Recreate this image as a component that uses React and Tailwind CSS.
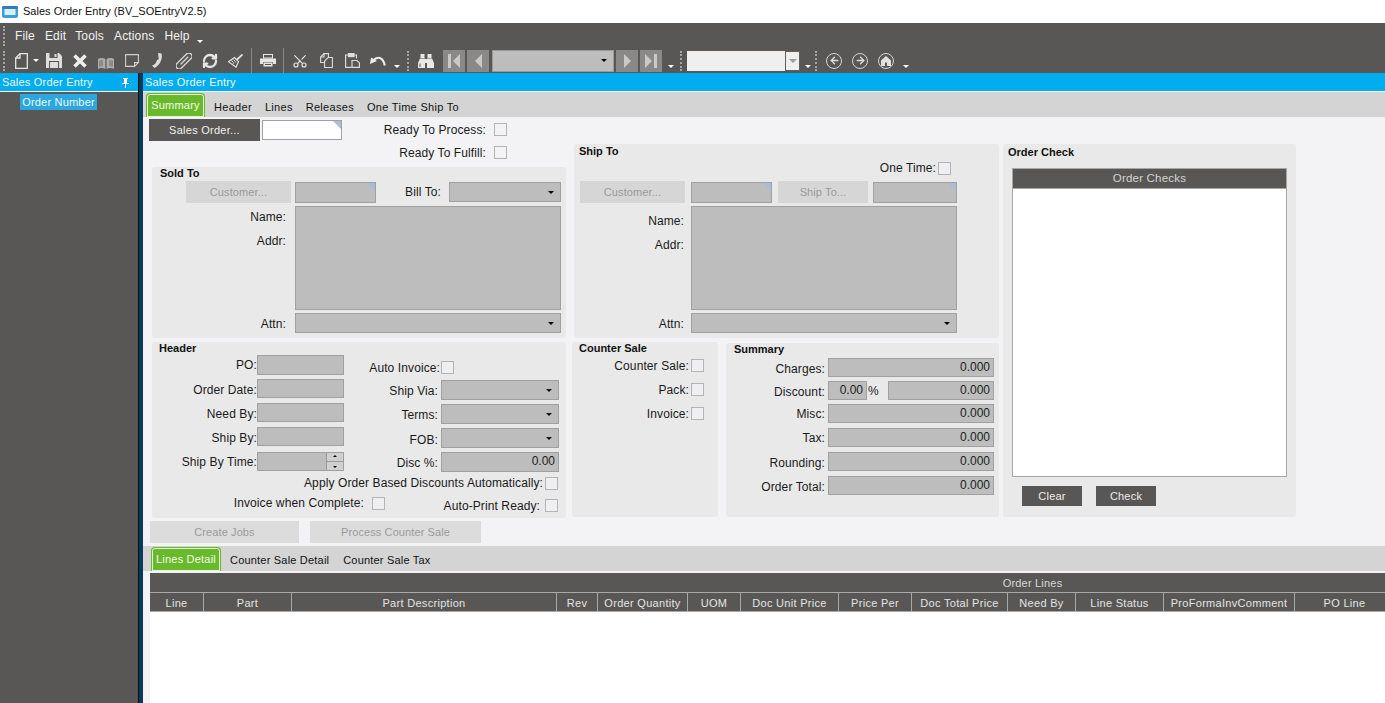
import React from "react";
import { Scissors, ArrowLeft, ArrowRight, RefreshCw } from "lucide-react";

const Lbl = ({ w, children, className = "" }) => (
  <div style={{ width: w }} className={"shrink-0 text-right text-[12px] leading-[14px] text-[#1a1a1a] tracking-[0.1px] whitespace-nowrap " + className}>{children}</div>
);
const Box = ({ w, h = 20, children, corner, className = "" }) => (
  <div style={{ width: w, height: h }} className={"relative shrink-0 border border-[#a0a0a0] bg-[#bdbdbd] text-[12px] leading-[16px] text-[#222] text-right pr-[3px] " + className}>
    {children}
    {corner && <div className="absolute top-0 right-0 w-0 h-0 border-l-[8px] border-l-transparent border-t-[8px] border-t-[#aabcd8]" />}
  </div>
);
const Combo = ({ w }) => (
  <Box w={w} className="flex items-center justify-end pr-[6px]">
    <div className="w-0 h-0 border-x-[3px] border-x-transparent border-t-[3px] border-t-black" />
  </Box>
);
const Chk = ({ className = "" }) => <div className={"w-[13px] h-[13px] shrink-0 border border-[#b4b4b4] bg-[#efeff1] " + className} />;
const DisBtn = ({ w, h = 22, children, className = "" }) => (
  <div style={{ width: w, height: h }} className={"shrink-0 flex items-center justify-center pt-[1px] bg-[#d6d6d6] text-[11px] text-[#9a9a9a] tracking-[0.1px] " + className}>{children}</div>
);
const Title = ({ children, className = "" }) => <div className={"font-bold text-[11px] leading-[13px] text-[#111] " + className}>{children}</div>;

const TabStrip = ({ active, tabs, activeW, className = "", textClass = "" }) => (
  <div className={"flex h-[25px] bg-[#d4d4d4] items-stretch " + className}>
    <div style={{ width: activeW }} className="mt-[1px] h-[24px] shrink-0 rounded-t-[4px] border border-b-0 border-[#68ba2a] shadow-[inset_0_0_0_1px_#e4f2d8] bg-[#68ba2a] text-[#f4fbee] text-[11px] tracking-[0.2px] leading-[22px] text-center whitespace-nowrap">{active}</div>
    <div className={"flex items-center pl-[9px] text-[11px] text-[#111] " + textClass}>
      {tabs.map((t) => <span key={t} className="whitespace-nowrap">{t}</span>)}
    </div>
  </div>
);

const Grip = ({ className = "" }) => <div className={"w-[2px] h-[20px] shrink-0 border-l-2 border-dotted border-[#a5a4a2] " + className} />;
const Sep = ({ className = "" }) => <div className={"w-px h-[25px] bg-[#8b8a88] shrink-0 " + className} />;
const Drop = ({ className = "" }) => <div className={"w-[6px] h-[3px] mt-[12px] shrink-0 " + className}><div className="w-0 h-0 border-x-[3px] border-x-transparent border-t-[3px] border-t-white" /></div>;

const NavBtn = ({ dir, end, className = "" }) => (
  <div className={"w-[22px] h-[22px] shrink-0 bg-[#8a8988] flex items-center justify-center " + className}>
    <svg width="14" height="14" viewBox="0 0 14 14" fill="#c9c9c9">
      {dir === "l" ? (
        <><path d="M13 0v14L6 7z" transform={end ? "" : "translate(-2 0)"} />{end && <rect x="1" y="0" width="3" height="14" />}</>
      ) : (
        <><path d="M1 0v14l7-7z" transform={end ? "" : "translate(3 0)"} />{end && <rect x="10" y="0" width="3" height="14" />}</>
      )}
    </svg>
  </div>
);
const Circle = ({ children, className = "" }) => (
  <div className={"w-[16px] h-[16px] shrink-0 rounded-full border-[1.5px] border-[#d4d4d4] flex items-center justify-center " + className}>{children}</div>
);

const S = "#e6e6e6";
const FileIcon = (p) => (
  <svg width="13" height="16" viewBox="0 0 13 16" fill="none" stroke={S} strokeWidth="1.3" {...p}>
    <path d="M5 .7h7.3v14.6H.7V5z" /><path d="M5 .7V5H.7" />
  </svg>
);
const SaveIcon = (p) => (
  <svg width="16" height="15" viewBox="0 0 16 15" {...p}>
    <path d="M0 0h13l3 3v12H0z" fill="#dedede" />
    <rect x="3.5" y="0" width="8" height="5" fill="#595755" /><rect x="8.5" y="1" width="2" height="3" fill="#dedede" />
    <rect x="3" y="8" width="10" height="7" fill="#595755" /><rect x="4" y="9" width="8" height="6" fill="#dedede" />
  </svg>
);
const XIcon = (p) => (
  <svg width="14" height="14" viewBox="0 0 14 14" stroke="#ececec" strokeWidth="3.6" {...p}><path d="M1.5 1.5l11 11M12.5 1.5l-11 11" /></svg>
);
const BookIcon = (p) => (
  <svg width="16" height="12" viewBox="0 0 16 12" {...p}>
    <path d="M0 2c2-1.5 5-1.5 7.4 0v10C5 10.700 2 10.700 0 12z" fill="#aeadac" /><path d="M16 2c-2-1.500-5-1.500-7.400 0v10c2.400-1.300 5.400-1.300 7.400 0z" fill="#aeadac" />
    <path d="M2 3.500v6M4 3.200v6M12 3.200v6M14 3.500v6" stroke="#595755" strokeWidth="0.8" />
  </svg>
);
const NoteIcon = (p) => (
  <svg width="14" height="13" viewBox="0 0 14 13" fill="none" stroke="#cfcfcf" strokeWidth="1.1" {...p}>
    <path d="M.6.6h12.800v8l-3.800 3.800H.6z" /><path d="M9.600 12.400V8.600h3.800" />
  </svg>
);
const PhoneIcon = (p) => (
  <svg width="11" height="15" viewBox="0 0 11 15" {...p}>
    <path d="M6 0l3.500.6c1.500 5-1.500 11.500-7 14.400L0 12.600c3-1 4.500-3 5-5.600l1.800-.8z" fill="#dedede" />
  </svg>
);
const ClipIcon = (p) => (
  <svg width="16" height="16" viewBox="0 0 16 16" fill="none" stroke="#d8d8d8" strokeWidth="1.300" {...p}>
    <g transform="rotate(45 8 8)"><rect x="4.800" y="-2" width="6.400" height="20" rx="3.200" /><path d="M8 2v11" /></g>
  </svg>
);
const BroomIcon = (p) => (
  <svg width="15" height="14" viewBox="0 0 15 14" fill="none" stroke="#e0e0e0" strokeWidth="1.200" {...p}>
    <path d="M14.500.5L8.500 6" strokeWidth="1.800" />
    <path d="M6.500 3.500l4 4.200-2.500 5.500-7.500-5.500z" />
    <path d="M3.500 6.500l2 2M5.500 5.500l2.500 3M4 11l2-2.500" strokeWidth="0.900" />
  </svg>
);
const PrinterIcon = (p) => (
  <svg width="16" height="13" viewBox="0 0 16 13" {...p}>
    <rect x="3.500" y="0.500" width="9" height="3.500" fill="none" stroke={S} />
    <path d="M0 4.500h16V10h-3V8H3v2H0z" fill={S} />
    <rect x="3.500" y="8.500" width="9" height="4" fill={S} />
    <path d="M5 10.500h6" stroke="#595755" />
  </svg>
);
const CopyIcon = (p) => (
  <svg width="13" height="15" viewBox="0 0 13 15" fill="none" stroke="#dcdcdc" strokeWidth="1.100" {...p}>
    <path d="M4 9.500H.6V4L4 .6h4.500V4" /><path d="M8 4.500h4.400v10H4.600V8z" /><path d="M4 .6V4H.6" />
  </svg>
);
const PasteIcon = (p) => (
  <svg width="15" height="15" viewBox="0 0 15 15" fill="none" stroke="#dcdcdc" strokeWidth="1.200" {...p}>
    <path d="M3.500 2H.6v12.400h6" /><path d="M9 2h2.500v3.500" /><rect x="3.500" y="0.600" width="5.500" height="3" fill="#dcdcdc" />
    <path d="M7 7.500h5l2.400 2.400v4.500H7z" />
  </svg>
);
const UndoIcon = (p) => (
  <svg width="16" height="10" viewBox="0 0 16 10" {...p}>
    <path d="M0 8L1 1.500 7 5z" fill="#ececec" />
    <path d="M3 4.800C7 0 13 .5 14.800 9.500" fill="none" stroke="#ececec" strokeWidth="2.200" />
  </svg>
);
const BinocIcon = (p) => (
  <svg width="16" height="14" viewBox="0 0 16 14" fill="#e8e8e8" {...p}>
    <rect x="2.500" y="0" width="4" height="4" /><rect x="9.500" y="0" width="4" height="4" />
    <path d="M2 4.500h5V14H0V9z" /><path d="M14 4.500H9V14h7V9z" /><rect x="7" y="5" width="2" height="4" />
    <path d="M2 9.500v3.500" stroke="#595755" />
  </svg>
);
const HomeIcon = () => (
  <svg width="10" height="10" viewBox="0 0 10 10" fill="#e0e0e0"><path d="M5 0l5 4.500V10H6V6.500H4V10H0V4.500z" /></svg>
);
const PinIcon = (p) => (
  <svg width="7" height="10" viewBox="0 0 7 10" fill="#ffffff" {...p}><path d="M1 0h5v1H5v4h2v1H4v4H3V6H0V5h2V1H1z" /></svg>
);

const cols = [
  ["Line", 54], ["Part", 88], ["Part Description", 265], ["Rev", 41], ["Order Quantity", 90], ["UOM", 53],
  ["Doc Unit Price", 98], ["Price Per", 73], ["Doc Total Price", 96], ["Need By", 68], ["Line Status", 88], ["ProFormaInvComment", 131], ["PO Line", 100],
];

export default function App() {
  return (
    <div className="w-[1385px] h-[703px] overflow-hidden bg-white flex flex-col font-['Liberation_Sans',Arial,sans-serif]">
      {/* title bar */}
      <div className="h-[23px] flex items-center pl-[2px] shrink-0">
        <svg width="16" height="12" viewBox="0 0 16 12" className="mr-[5px] shrink-0">
          <rect x="0" y="0" width="16" height="12" rx="2" fill="#3f9ed8" />
          <rect x="0" y="0" width="16" height="3" rx="1.500" fill="#2f7fbf" />
          <rect x="2.500" y="3" width="11" height="6" fill="#d8effb" />
        </svg>
        <span className="text-[11px] tracking-[0.02px] text-[#111] whitespace-nowrap">Sales Order Entry (BV_SOEntryV2.5)</span>
      </div>

      {/* menu and toolbar */}
      <div className="h-[50px] shrink-0 bg-[#595755] text-white">
        <div className="h-[25px] flex items-center pl-[3px]">
          <Grip className="mr-[10px]" />
          <div className="flex gap-[10px] text-[12px] tracking-[0.15px] text-[#f2f2f2]">
            <span>File</span><span>Edit</span><span className="-ml-[1px]">Tools</span><span>Actions</span><span>Help</span>
          </div>
          <Drop className="ml-[7px] mt-[5px]" />
        </div>
        <div className="h-[25px] flex items-center pl-[3px]">
          <Grip className="mr-[10px]" />
          <FileIcon className="shrink-0" />
          <div className="w-0 h-0 ml-[5px] border-x-[3px] border-x-transparent border-t-[3px] border-t-white shrink-0" />
          <SaveIcon className="ml-[7px] shrink-0" />
          <XIcon className="ml-[11px] shrink-0" />
          <BookIcon className="ml-[11px] mt-[4px] shrink-0" />
          <NoteIcon className="ml-[11px] shrink-0" />
          <PhoneIcon className="ml-[13px] shrink-0" />
          <ClipIcon className="ml-[13px] shrink-0" />
          <RefreshCw size={16} strokeWidth={3.4} className="ml-[10px] shrink-0 text-[#e6e6e6]" />
          <BroomIcon className="ml-[10px] shrink-0" />
          <Sep className="ml-[8px]" />
          <PrinterIcon className="ml-[8px] shrink-0" />
          <Sep className="ml-[7px]" />
          <Scissors size={16} strokeWidth={1.75} className="ml-[8px] -rotate-90 shrink-0 text-[#e6e6e6]" />
          <CopyIcon className="ml-[12px] shrink-0" />
          <PasteIcon className="ml-[12px] shrink-0" />
          <UndoIcon className="ml-[10px] shrink-0" />
          <Drop className="ml-[8px]" />
          <Grip className="ml-[7px]" />
          <BinocIcon className="ml-[9px] shrink-0" />
          <NavBtn dir="l" end className="ml-[9px]" />
          <NavBtn dir="l" className="ml-[2px]" />
          <div className="ml-[3px] w-[122px] h-[22px] shrink-0 bg-[#bdbdbd] border border-[#999] flex items-center justify-end pr-[6px]">
            <div className="w-0 h-0 border-x-[3px] border-x-transparent border-t-[3px] border-t-black" />
          </div>
          <NavBtn dir="r" className="ml-[2px]" />
          <NavBtn dir="r" end className="ml-[2px]" />
          <Drop className="ml-[6px]" />
          <Grip className="ml-[6px]" />
          <div className="ml-[5px] w-[113px] h-[20px] shrink-0 bg-[#efefef] flex justify-end">
            <div className="w-[15px] h-[20px] border border-[#5f5f5f] bg-[#efefef] flex items-center justify-center">
              <div className="w-0 h-0 border-x-[4px] border-x-transparent border-t-[4px] border-t-[#9c9c9c]" />
            </div>
          </div>
          <Drop className="ml-[5px]" />
          <Grip className="ml-[4px]" />
          <Circle className="ml-[9px]"><ArrowLeft size={11} strokeWidth={3} className="text-[#dedede]" /></Circle>
          <Circle className="ml-[10px]"><ArrowRight size={11} strokeWidth={3} className="text-[#dedede]" /></Circle>
          <Circle className="ml-[10px]"><HomeIcon /></Circle>
          <Drop className="ml-[9px]" />
        </div>
      </div>

      <div className="flex-1 min-h-0 flex">
        {/* sidebar */}
        <div className="w-[138px] shrink-0 flex flex-col bg-[#595755]">
          <div className="h-[18px] shrink-0 bg-[#00adef] flex items-center pt-[1px] pl-[2px] pr-[9px] justify-between">
            <span className="text-[11px] tracking-[0.2px] text-[#eef8fd] whitespace-nowrap">Sales Order Entry</span>
            <PinIcon />
          </div>
          <div className="h-px bg-white shrink-0" />
          <div className="pl-[20px] pt-[2px]">
            <div className="w-[77px] h-[16px] bg-[#2ca6df] text-[#eef8fd] text-[11px] leading-[16px] text-center tracking-[0.2px] whitespace-nowrap">Order Number</div>
          </div>
        </div>
        <div className="w-[5px] shrink-0 bg-[#093a5c] border-l border-[#0d0d0d]" />

        {/* main */}
        <div className="flex-1 min-w-0 flex flex-col bg-[#f3f3f6]">
          <div className="h-[18px] shrink-0 bg-[#00adef] flex items-center pt-[1px] pl-[2px] text-[11px] tracking-[0.2px] text-[#eef8fd]">Sales Order Entry</div>
          <div className="h-px bg-white shrink-0" />
          <TabStrip className="pl-[3px]" textClass="gap-[13px] tracking-[0.3px] pt-[5px]" active="Summary" activeW={59} tabs={["Header", "Lines", "Releases", "One Time Ship To"]} />

          <div className="h-[401px] shrink-0 flex items-start">
            {/* column A */}
            <div className="w-[423px] ml-[6px] shrink-0">
              <div className="flex mt-[2px] items-start">
                <div className="w-[111px] h-[22px] shrink-0 bg-[#595755] text-[#f0f0f0] text-[11px] tracking-[0.25px] pt-[1px] flex items-center justify-center">Sales Order...</div>
                <div className="ml-[2px] mt-[1px]"><Box w={80} corner className="bg-white" /></div>
                <div className="ml-[2px] flex flex-col">
                  <div className="flex items-center h-[19px] mt-[1px]"><Lbl w={142}>Ready To Process:</Lbl><Chk className="ml-[8px] bg-[#f3f3f6]" /></div>
                  <div className="flex items-center h-[19px] mt-[4px]"><Lbl w={142}>Ready To Fulfill:</Lbl><Chk className="ml-[8px] bg-[#f3f3f6]" /></div>
                </div>
              </div>

              {/* Sold To */}
              <div className="ml-[3px] w-[414px] h-[171px] mt-[5px] bg-[#e9e9e9] rounded-[3px] flex flex-col">
                <Title className="pl-[8px]">Sold To</Title>
                <div className="flex mt-[1px] items-center">
                  <DisBtn w={105} className="ml-[34px]">Customer...</DisBtn>
                  <div className="ml-[4px]"><Box w={81} h={21} corner /></div>
                  <Lbl w={65}>Bill To:</Lbl>
                  <div className="ml-[8px]"><Combo w={112} /></div>
                </div>
                <div className="flex mt-[3px]">
                  <div className="w-[134px] shrink-0 flex flex-col items-end pt-[4px] gap-[10px]">
                    <Lbl w={60}>Name:</Lbl><Lbl w={60}>Addr:</Lbl>
                  </div>
                  <div className="ml-[9px]"><Box w={266} h={104} /></div>
                </div>
                <div className="flex mt-[3px] items-center">
                  <Lbl w={134} className="pt-[1px]">Attn:</Lbl>
                  <div className="ml-[9px]"><Combo w={266} /></div>
                </div>
              </div>

              {/* Header */}
              <div className="ml-[3px] w-[414px] h-[176px] mt-[4px] bg-[#e9e9e9] rounded-[3px] flex flex-col">
                <Title className="pl-[7px]">Header</Title>
                <div className="flex">
                  <div className="w-[192px] shrink-0 flex flex-col">
                    {[["PO:", 0], ["Order Date:", 4], ["Need By:", 5], ["Ship By:", 5]].map(([l, m], i) => (
                      <div key={l} style={{ marginTop: m }} className="flex items-center">
                        <Lbl w={105} className={i === 0 ? "" : "pt-[2px]"}>{l}</Lbl><Box w={87} h={i === 0 ? 20 : 19} />
                      </div>
                    ))}
                    <div className="flex items-center mt-[6px]">
                      <Lbl w={105}>Ship By Time:</Lbl>
                      <Box w={87} h={19} className="flex justify-end !pr-0">
                        <div className="w-[17px] h-[17px] bg-[#d0d0d0] border-l border-[#999] flex flex-col items-center justify-around">
                          <div className="w-0 h-0 border-x-[2px] border-x-transparent border-b-[2px] border-b-black" />
                          <div className="w-full h-px bg-[#999]" />
                          <div className="w-0 h-0 border-x-[2px] border-x-transparent border-t-[2px] border-t-black" />
                        </div>
                      </Box>
                    </div>
                  </div>
                  <div className="flex-1 flex flex-col -mt-[6px]">
                    <div className="flex items-center h-[19px] mt-[9px]"><Lbl w={96}>Auto Invoice:</Lbl><Chk className="ml-[1px]" /></div>
                    <div className="flex items-center mt-[3px]"><Lbl w={94} className="pt-[1px]">Ship Via:</Lbl><div className="ml-[3px]"><Combo w={118} /></div></div>
                    <div className="flex items-center mt-[4px]"><Lbl w={94} className="pt-[2px]">Terms:</Lbl><div className="ml-[3px]"><Combo w={118} /></div></div>
                    <div className="flex items-center mt-[4px]"><Lbl w={94} className="pt-[3px]">FOB:</Lbl><div className="ml-[3px]"><Combo w={118} /></div></div>
                    <div className="flex items-center mt-[4px]"><Lbl w={94} className="pt-[1px]">Disc %:</Lbl><div className="ml-[3px]"><Box w={118}>0.00</Box></div></div>
                  </div>
                </div>
                <div className="flex items-center mt-[4px] h-[14px]">
                  <Lbl w={391}>Apply Order Based Discounts Automatically:</Lbl><Chk className="ml-[2px]" />
                </div>
                <div className="flex items-start mt-[7px]">
                  <Lbl w={212} className="-mt-[1px]">Invoice when Complete:</Lbl><Chk className="ml-[8px]" />
                  <Lbl w={155} className="mt-[2px]">Auto-Print Ready:</Lbl><Chk className="ml-[5px] mt-[2px]" />
                </div>
              </div>
            </div>

            {/* column B */}
            <div className="w-[431px] shrink-0 mt-[27px]">
              <div className="ml-[2px] w-[425px] h-[194px] bg-[#e9e9e9] rounded-[3px] flex flex-col">
                <Title className="pl-[5px] pt-[1px]">Ship To</Title>
                <div className="flex items-center justify-end mt-[2px] pr-[48px] h-[16px]"><Lbl w={70}>One Time:</Lbl><Chk className="ml-[2px]" /></div>
                <div className="flex mt-[5px] items-center">
                  <DisBtn w={105} className="ml-[6px]">Customer...</DisBtn>
                  <div className="ml-[6px]"><Box w={81} h={21} corner /></div>
                  <DisBtn w={90} className="ml-[6px]">Ship To...</DisBtn>
                  <div className="ml-[5px]"><Box w={84} h={21} corner /></div>
                </div>
                <div className="flex mt-[3px]">
                  <div className="w-[110px] shrink-0 flex flex-col items-end pt-[8px] gap-[10px]">
                    <Lbl w={60}>Name:</Lbl><Lbl w={60}>Addr:</Lbl>
                  </div>
                  <div className="ml-[7px]"><Box w={266} h={104} /></div>
                </div>
                <div className="flex mt-[3px] items-center">
                  <Lbl w={110} className="pt-[1px]">Attn:</Lbl>
                  <div className="ml-[7px]"><Combo w={266} /></div>
                </div>
              </div>
              <div className="flex mt-[4px] items-start">
                <div className="w-[146px] h-[175px] shrink-0 bg-[#e9e9e9] rounded-[3px] flex flex-col">
                  <Title className="pl-[7px]">Counter Sale</Title>
                  {[["Counter Sale:", 4], ["Pack:", 11], ["Invoice:", 11]].map(([l, m]) => (
                    <div key={l} style={{ marginTop: m }} className="flex items-center h-[13px]">
                      <Lbl w={117}>{l}</Lbl><Chk className="ml-[2px]" />
                    </div>
                  ))}
                </div>
                <div className="ml-[8px] mt-[1px] w-[273px] h-[174px] shrink-0 bg-[#e9e9e9] rounded-[3px] flex flex-col">
                  <Title className="pl-[8px]">Summary</Title>
                  <div className="flex flex-col pt-[2px] gap-[4px]">
                    <div className="flex items-center"><Lbl w={99} className="pt-[2px]">Charges:</Lbl><div className="ml-[3px]"><Box w={166} h={19}>0.000</Box></div></div>
                    <div className="flex items-center"><Lbl w={99} className="pt-[2px]">Discount:</Lbl><div className="ml-[3px]"><Box w={39} h={19}>0.00</Box></div><span className="w-[21px] pl-[1px] text-[12px] text-[#222]">%</span><Box w={106} h={19}>0.000</Box></div>
                    <div className="flex items-center"><Lbl w={99} className="pt-[1px]">Misc:</Lbl><div className="ml-[3px]"><Box w={166} h={19}>0.000</Box></div></div>
                    <div className="flex items-center mt-[1px]"><Lbl w={99} className="pt-[1px]">Tax:</Lbl><div className="ml-[3px]"><Box w={166} h={19}>0.000</Box></div></div>
                    <div className="flex items-center mt-[1px]"><Lbl w={99} className="pt-[3px]">Rounding:</Lbl><div className="ml-[3px]"><Box w={166} h={19}>0.000</Box></div></div>
                    <div className="flex items-center mt-[1px]"><Lbl w={99} className="pt-[2px]">Order Total:</Lbl><div className="ml-[3px]"><Box w={166} h={19}>0.000</Box></div></div>
                  </div>
                </div>
              </div>
            </div>

            {/* column C */}
            <div className="w-[293px] h-[373px] shrink-0 mt-[27px] bg-[#e9e9e9] rounded-[3px] flex flex-col">
              <Title className="pl-[5px] pt-[2px]">Order Check</Title>
              <div className="ml-[9px] mt-[9px] w-[275px] h-[309px] border border-[#a6a6a6] bg-white flex flex-col">
                <div className="h-[20px] pt-[1px] bg-[#595755] text-[#d4d4d4] text-[11.5px] tracking-[0.2px] flex items-center justify-center border-b border-[#a6a6a6]">Order Checks</div>
              </div>
              <div className="flex mt-[9px] ml-[19px] gap-[14px]">
                <div className="w-[60px] h-[20px] pt-[1px] bg-[#595755] text-[#ececec] text-[11px] tracking-[0.2px] flex items-center justify-center">Clear</div>
                <div className="w-[60px] h-[20px] pt-[1px] bg-[#595755] text-[#ececec] text-[11px] tracking-[0.2px] flex items-center justify-center">Check</div>
              </div>
            </div>
          </div>

          <div className="flex ml-[7px] mt-[3px] gap-[11px]">
            <DisBtn w={149} className="!bg-[#dcdcdc]">Create Jobs</DisBtn>
            <DisBtn w={171} className="!bg-[#dcdcdc]">Process Counter Sale</DisBtn>
          </div>

          <TabStrip className="mt-[3px] pl-[8px]" textClass="gap-[14px] tracking-[0.2px] pt-[4px]" active="Lines Detail" activeW={70} tabs={["Counter Sale Detail", "Counter Sale Tax"]} />
          <div className="ml-[7px] mt-[2px] flex-1 min-h-0 flex flex-col bg-white overflow-hidden">
            <div className="h-[19px] shrink-0 pl-[530px] pt-[1px] bg-[#595755] text-[#d8d8d8] text-[11px] tracking-[0.2px] flex items-center justify-center">Order Lines</div>
            <div className="flex h-[20px] shrink-0 bg-[#595755] border-t border-b border-[#a8a8a8]">
              {cols.map(([c, w]) => (
                <div key={c} style={{ width: w }} className="shrink-0 flex items-center justify-center pt-[2px] border-r border-[#a8a8a8] text-[#e4e4e4] text-[11px] tracking-[0.3px] whitespace-nowrap">{c}</div>
              ))}
            </div>
          </div>
        </div>
      </div>
    </div>
  );
}
